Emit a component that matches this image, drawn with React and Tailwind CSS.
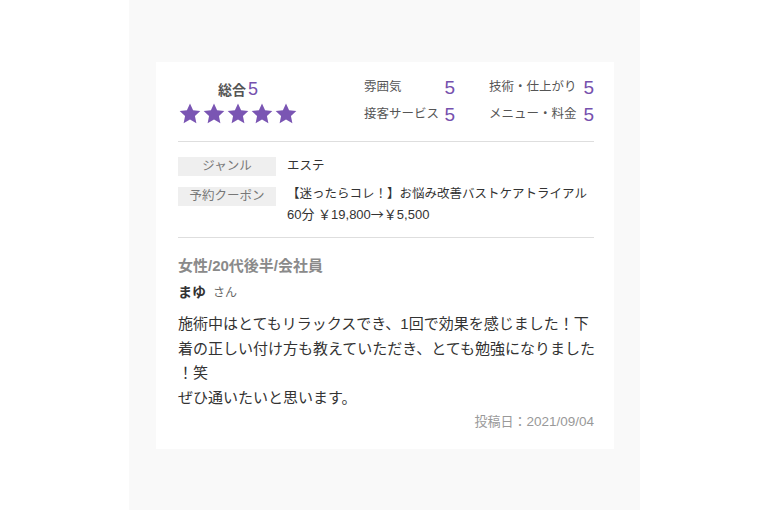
const purple = 'text-[#7650ae]';

function Star() {
  return (
    <svg width="22" height="21" viewBox="0 0 24 23" className="fill-[#7a55b3]">
      <path d="M12 0.6l3.4 7.3 7.9 0.9-5.9 5.4 1.6 7.9L12 18.1l-7 4 1.6-7.9L0.7 8.8l7.9-0.9z" />
    </svg>
  );
}

function Rating({ label }) {
  return (
    <div className="flex items-center justify-between h-[19px]">
      <span className="text-[12.5px] text-[#555]">{label}</span>
      <span className={`text-[19px] leading-none ${purple}`}>5</span>
    </div>
  );
}

export default function App() {
  return (
    <div
      className="w-[770px] h-[510px] bg-white flex"
      style={{ fontFamily: '"Liberation Sans", "Noto Sans CJK JP", sans-serif' }}
    >
      <div className="ml-[129px] w-[511px] h-full bg-[#f9f9f9] pl-[27px] pt-[62px]">
        <div className="w-[458px] bg-white pl-[22px] pr-[20px] pt-[16px] pb-[18px] text-[#333]">
          {/* ratings */}
          <div className="flex items-center">
            <div className="flex flex-col items-center w-[120px]">
              <div className="flex items-baseline leading-[20px]">
                <span className="text-[14px] font-semibold text-[#555]">総合</span>
                <span className={`text-[18px] ml-[2px] ${purple}`}>5</span>
              </div>
              <div className="flex gap-[2px] mt-[3px]">
                <Star /><Star /><Star /><Star /><Star />
              </div>
            </div>
            <div className="ml-auto grid grid-cols-[91px_105px] gap-x-[34px] gap-y-[8px]">
              <Rating label="雰囲気" />
              <Rating label="技術・仕上がり" />
              <Rating label="接客サービス" />
              <Rating label="メニュー・料金" />
            </div>
          </div>

          <div className="border-t border-[#dedede] mt-[17px]" />

          {/* genre / coupon */}
          <div className="mt-[15px] flex flex-col gap-[11px] text-[12.5px]">
            <div className="flex gap-[11px]">
              <div className="w-[98px] h-[19px] leading-[19px] bg-[#efefef] text-center text-[#777] shrink-0">ジャンル</div>
              <div className="leading-[19px]">エステ</div>
            </div>
            <div className="flex gap-[11px]">
              <div className="w-[98px] h-[19px] leading-[19px] bg-[#efefef] text-center text-[#777] shrink-0">予約クーポン</div>
              <div className="leading-[20px] -mt-[3px] text-[13px]">
                <span className="text-[12.5px]">【迷ったらコレ！】お悩み改善バストケアトライアル</span>
                <br />
                60分 ￥19,800<span className="font-['Noto_Sans_CJK_JP']">→</span>￥5,500
              </div>
            </div>
          </div>

          <div className="border-t border-[#dedede] mt-[12px]" />

          {/* review */}
          <div className="mt-[17px] text-[15px] leading-[22px] font-semibold text-[#8a8a8a]">女性/20代後半/会社員</div>
          <div className="mt-[4px] leading-[22px] flex items-baseline">
            <span className="text-[14px] font-bold text-[#333]">まゆ</span>
            <span className="text-[12px] text-[#666] ml-[7px]">さん</span>
          </div>
          <div className="mt-[8px] text-[15px] leading-[24.5px] text-[#333] whitespace-nowrap">
            <div>施術中はとてもリラックスでき、1回で効果を感じました！下</div>
            <div>着の正しい付け方も教えていただき、とても勉強になりました</div>
            <div>！笑</div>
            <div>ぜひ通いたいと思います。</div>
          </div>
          <div className="mt-[3px] text-right text-[13px] leading-[18px] text-[#999]">
            投稿日：<span className="text-[13.5px]">2021/09/04</span>
          </div>
        </div>
      </div>
    </div>
  );
}
